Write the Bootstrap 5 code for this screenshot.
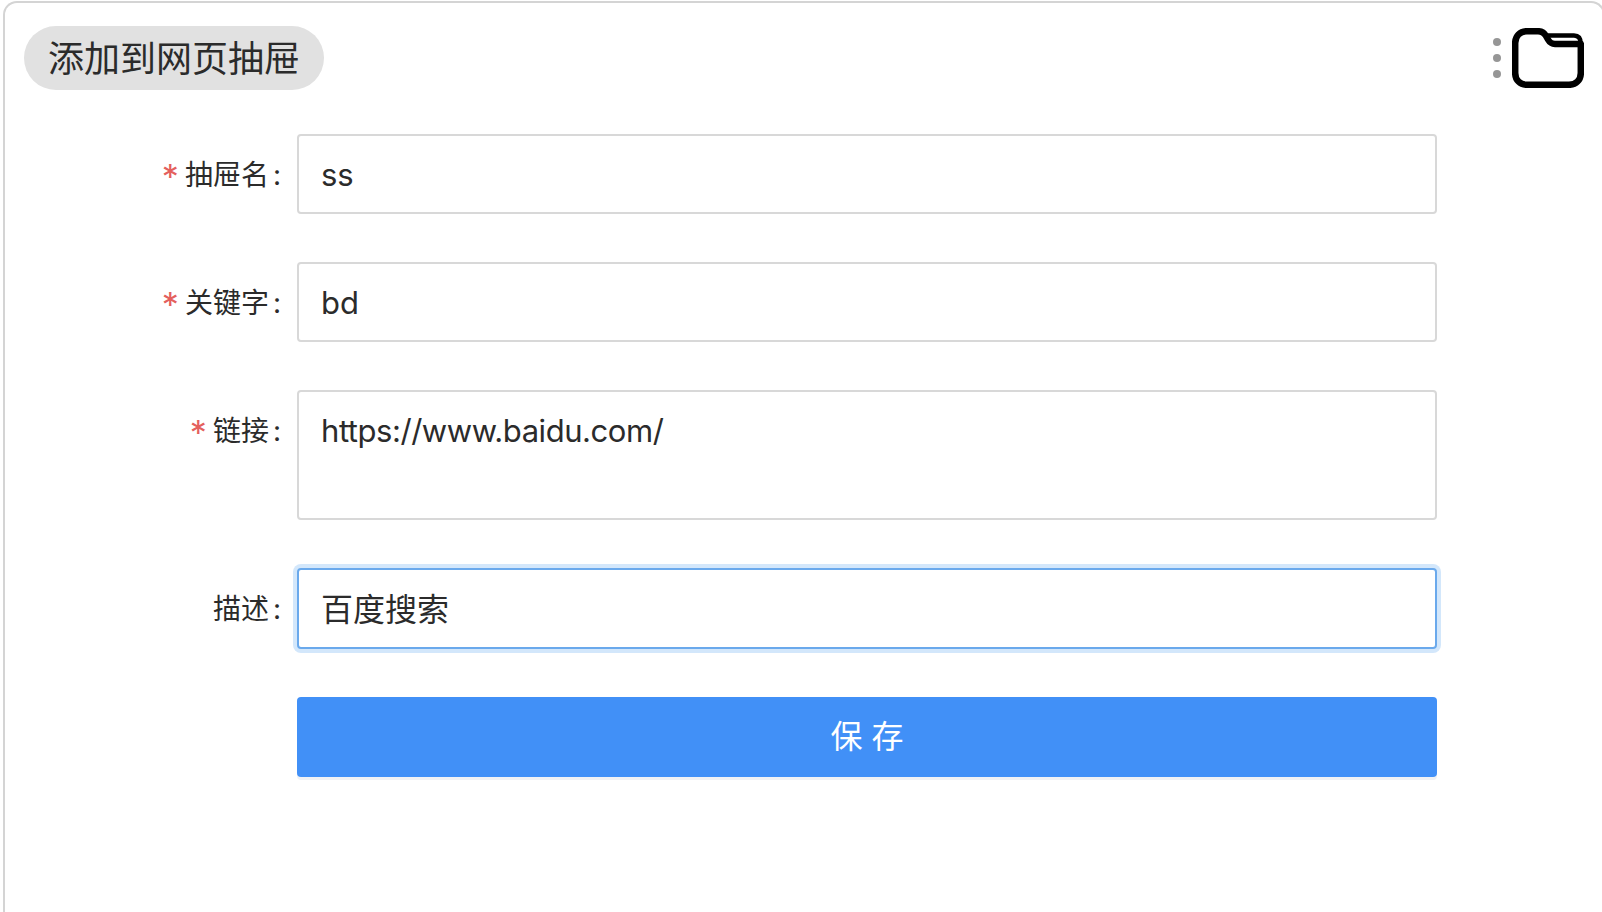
<!DOCTYPE html>
<html lang="zh-CN">
<head>
    <meta charset="UTF-8">
    <meta name="viewport" content="width=device-width, initial-scale=1.0">
    <title>添加到网页抽屉</title>
    <link href="https://cdn.jsdelivr.net/npm/bootstrap@5.3.0/dist/css/bootstrap.min.css" rel="stylesheet">
    <style>
        html, body {
            height: 100%;
        }
        body {
            background-color: #fff;
            color: #2b2b2b;
            font-family: "Inter", "Noto Sans CJK SC", sans-serif;
            overflow: hidden;
        }
        .app-window {
            height: 916px;
            margin: 1px -3px 0 3px;
            border: 2px solid #d4d4d4;
            border-bottom: 0;
            border-radius: 14px 14px 0 0;
            padding: 23px 0 0 19px;
        }
        .title-pill {
            height: 64px;
            padding: 0 24px;
            background-color: #e1e1e1;
            border-radius: 32px;
            font-size: 36px;
            line-height: 66px;
            color: #2b2b2b;
        }
        .tool-box {
            margin-right: 19px;
            height: 64px;
        }
        .more-dots {
            width: 8px;
            gap: 8px;
            margin-right: 11px;
        }
        .more-dots span {
            width: 8px;
            height: 8px;
            border-radius: 50%;
            background-color: #969696;
        }
        .drawer-form {
            margin-top: 44px;
        }
        .form-line {
            margin-bottom: 48px;
        }
        .label-cell {
            width: 273px;
            height: 80px;
            padding-right: 16px;
            font-size: 28px;
            line-height: 82px;
            color: #2b2b2b;
            white-space: nowrap;
        }
        .req-star {
            display: inline-block;
            height: 28px;
            margin-right: 6px;
            margin-top: 23px;
            font-size: 34px;
            line-height: 40px;
            vertical-align: top;
            color: #e4605d;
        }
        .label-colon {
            margin-left: 4px;
        }
        .field-cell {
            width: 1140px;
        }
        .drawer-input.form-control {
            height: 80px;
            padding: 1px 22px 0;
            border: 2px solid #d8d8d8;
            border-radius: 4px;
            font-size: 31px;
            color: #2b2b2b;
            box-shadow: none;
        }
        textarea.drawer-input.form-control {
            height: 130px;
            padding: 19px 22px;
            line-height: 40px;
            letter-spacing: -0.45px;
            resize: none;
        }
        .drawer-input.is-focused.form-control {
            height: 81px;
            font-size: 32px;
            padding-top: 0;
            padding-bottom: 3px;
            border-color: #6aa9ec;
            box-shadow: 0 0 0 4px #d3e7fb;
        }
        .save-btn.btn {
            height: 80px;
            background-color: #4190f7;
            border: 0;
            border-radius: 4px;
            font-size: 32px;
            color: #fff;
            box-shadow: 0 3px 0 #f0f2f5;
        }
    </style>
</head>
<body>
    <div class="app-window">
        <div class="d-flex justify-content-between align-items-center">
            <div class="title-pill">添加到网页抽屉</div>
            <div class="tool-box d-flex align-items-center">
                <div class="more-dots d-flex flex-column">
                    <span></span>
                    <span></span>
                    <span></span>
                </div>
                <svg width="72" height="60" viewBox="0 0 72 60" fill="none" stroke="#000" stroke-width="6.5" stroke-linejoin="round" stroke-linecap="round">
                    <path d="M3.2 15C3.2 8 8 3.2 15 3.2H26C30 3.2 32 4.5 34 8L36 11.5C38 15 39.5 16 43 16H68.8V45C68.8 52 64 56.8 57 56.8H15C8 56.8 3.2 52 3.2 45Z"/>
                    <path d="M36 7.5H62C66.5 7.5 68.8 10 68.8 16" stroke-width="4.5"/>
                </svg>
            </div>
        </div>

        <form class="drawer-form">
            <div class="form-line d-flex">
                <label class="label-cell text-end"><span class="req-star">*</span>抽屉名<span class="label-colon">:</span></label>
                <div class="field-cell">
                    <input type="text" class="form-control drawer-input" value="ss">
                </div>
            </div>
            <div class="form-line d-flex">
                <label class="label-cell text-end"><span class="req-star">*</span>关键字<span class="label-colon">:</span></label>
                <div class="field-cell">
                    <input type="text" class="form-control drawer-input" value="bd">
                </div>
            </div>
            <div class="form-line d-flex">
                <label class="label-cell text-end"><span class="req-star">*</span>链接<span class="label-colon">:</span></label>
                <div class="field-cell">
                    <textarea class="form-control drawer-input">https://www.baidu.com/</textarea>
                </div>
            </div>
            <div class="form-line d-flex">
                <label class="label-cell text-end">描述<span class="label-colon">:</span></label>
                <div class="field-cell">
                    <input type="text" class="form-control drawer-input is-focused" value="百度搜索">
                </div>
            </div>
            <div class="form-line d-flex">
                <div class="label-cell"></div>
                <div class="field-cell">
                    <button type="button" class="btn save-btn w-100">保 存</button>
                </div>
            </div>
        </form>
    </div>
    <script src="https://cdn.jsdelivr.net/npm/bootstrap@5.3.0/dist/js/bootstrap.bundle.min.js"></script>
</body>
</html>
